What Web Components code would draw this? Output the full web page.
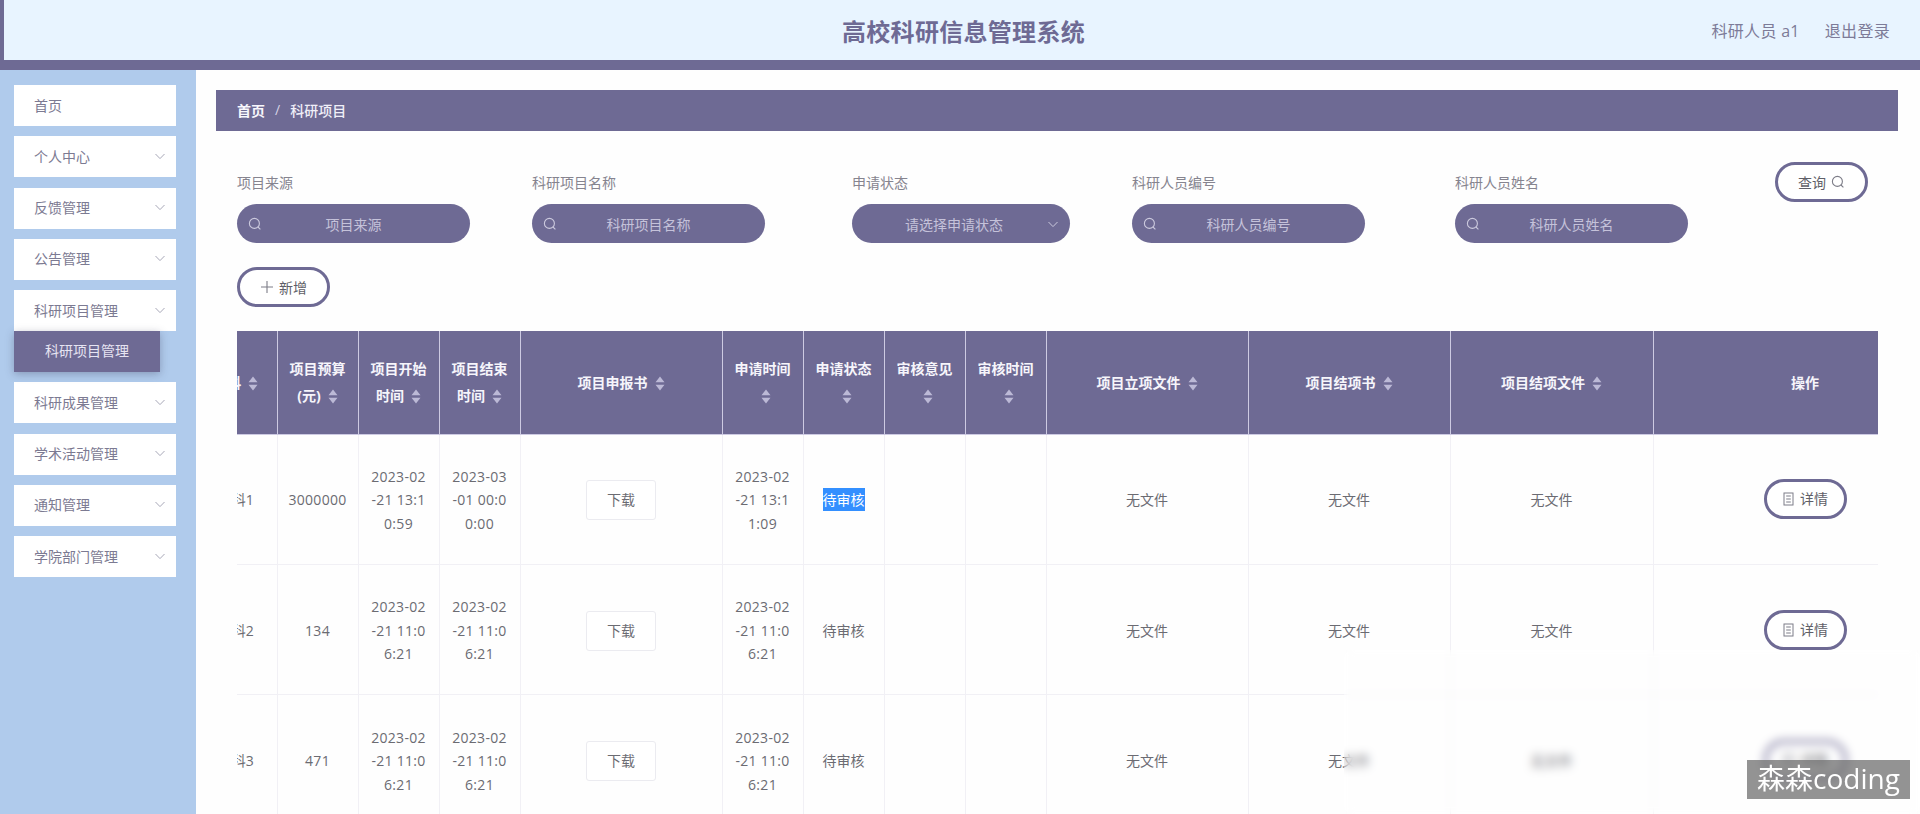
<!DOCTYPE html>
<html lang="zh">
<head>
<meta charset="utf-8">
<title>高校科研信息管理系统</title>
<style>
  html, body { margin: 0; height: 100%; overflow: hidden; background: #fff; }
  body { font-family: "Open Sans", "Noto Sans CJK SC", sans-serif; font-size: 14px; }
</style>
</head>
<body>
<app-shell>
  <app-header slot="header" title-text="高校科研信息管理系统"></app-header>
  <side-nav slot="nav">
    <nav-item plain>首页</nav-item>
    <nav-item>个人中心</nav-item>
    <nav-item>反馈管理</nav-item>
    <nav-item>公告管理</nav-item>
    <nav-item sub="科研项目管理">科研项目管理</nav-item>
    <nav-item>科研成果管理</nav-item>
    <nav-item>学术活动管理</nav-item>
    <nav-item>通知管理</nav-item>
    <nav-item>学院部门管理</nav-item>
  </side-nav>
  <bread-crumb home="首页" current="科研项目"></bread-crumb>
  <filter-bar></filter-bar>
  <project-table></project-table>
</app-shell>

<script>
const PURPLE = '#6e6a94';

const ICONS = {
  search: '<svg width="14" height="14" viewBox="0 0 14 14" fill="none" stroke="currentColor" stroke-width="1.1"><circle cx="6.4" cy="6.4" r="5"/><path d="M10 10l2.4 2.4"/></svg>',
  chevron: '<svg width="12" height="12" viewBox="0 0 12 12" fill="none" stroke="currentColor" stroke-width="1"><path d="M1.5 4l4.5 4.6L10.5 4"/></svg>',
  plus: '<svg width="14" height="14" viewBox="0 0 14 14" fill="none" stroke="currentColor" stroke-width="1.1"><path d="M7 1v12M1 7h12"/></svg>',
  doc: '<svg width="13" height="14" viewBox="0 0 13 14" fill="none" stroke="currentColor" stroke-width="1"><rect x="2" y="1" width="9" height="12"/><path d="M4.2 4h4.6M4.2 7h4.6M4.2 10h4.6"/></svg>'
};

class AppShell extends HTMLElement {
  connectedCallback() {
    this.attachShadow({ mode: 'open' }).innerHTML = `
      <style>
        :host { display: grid; grid-template-columns: 196px 1fr; grid-template-rows: 70px 1fr; height: 814px; position: relative; overflow: hidden; }
        .top { grid-column: 1 / 3; }
        .main { padding: 20px 22px 0 20px; min-width: 0; overflow: hidden; background: #fefefe; }
        /* the recording has a smeared patch over the last row */
        .smear { position: absolute; left: 1344px; top: 650px; right: 0; bottom: 0; backdrop-filter: blur(5px); }
        .mark { position: absolute; left: 1747px; top: 760px; width: 163px; height: 39px; box-sizing: border-box; background: rgba(105,105,105,.72); color: #fff; font-size: 28px; line-height: 37px; text-align: center; white-space: nowrap; }
      </style>
      <div class="top"><slot name="header"></slot></div>
      <slot name="nav"></slot>
      <div class="main"><slot></slot></div>
      <div class="smear"></div>
      <div class="mark">森森coding</div>`;
  }
}

class AppHeader extends HTMLElement {
  connectedCallback() {
    this.attachShadow({ mode: 'open' }).innerHTML = `
      <style>
        :host { display: block; height: 70px; box-sizing: border-box; border-left: 4px solid ${PURPLE}; border-bottom: 10px solid ${PURPLE}; background: #e8f4ff; }
        .bar { height: 60px; display: grid; grid-template-columns: 1fr auto 1fr; align-items: center; }
        h1 { grid-column: 2; margin: 0 0 0 3px; font-size: 24px; font-weight: 700; letter-spacing: .3px; color: ${PURPLE}; white-space: nowrap; }
        .user { grid-column: 3; justify-self: end; display: flex; gap: 25px; padding-right: 30px; font-size: 16px; letter-spacing: .3px; color: #7d7b98; }
      </style>
      <div class="bar">
        <h1>${this.getAttribute('title-text')}</h1>
        <div class="user"><span>科研人员 a1</span><span>退出登录</span></div>
      </div>`;
  }
}

class SideNav extends HTMLElement {
  connectedCallback() {
    this.attachShadow({ mode: 'open' }).innerHTML = `
      <style>
        :host { display: flex; flex-direction: column; gap: 10.25px; padding: 15px 20px 0 14px; box-sizing: border-box; background: #b0cbec; height: 744px; }
      </style>
      <slot></slot>`;
  }
}

class NavItem extends HTMLElement {
  connectedCallback() {
    const sub = this.getAttribute('sub');
    this.attachShadow({ mode: 'open' }).innerHTML = `
      <style>
        :host { display: block; color: #7c7a92; }
        .row { height: 41px; background: #fff; display: flex; align-items: center; justify-content: space-between; padding: 0 10px 2px 20px; box-sizing: border-box; }
        .arrow { display: flex; color: #a8a8b8; }
        .sub { width: 146px; height: 41px; line-height: 39px; text-align: center; background: ${PURPLE}; color: #e6e4f2; box-shadow: 0 2px 8px rgba(60,60,90,.35); position: relative; }
      </style>
      <div class="row"><span><slot></slot></span>${this.hasAttribute('plain') ? '' : `<span class="arrow">${ICONS.chevron}</span>`}</div>
      ${sub ? `<div class="sub">${sub}</div>` : ''}`;
  }
}

class BreadCrumb extends HTMLElement {
  connectedCallback() {
    this.attachShadow({ mode: 'open' }).innerHTML = `
      <style>
        :host { display: flex; align-items: center; height: 41px; box-sizing: border-box; padding: 0 0 2px 21px; background: ${PURPLE}; color: #f0eff8; font-weight: 500; }
        b { color: #f8f7fc; }
        .sep { margin: 0 10px; font-weight: 400; color: #d5d3e6; }
      </style>
      <b>${this.getAttribute('home')}</b><span class="sep">/</span><span>${this.getAttribute('current')}</span>`;
  }
}

class FilterField extends HTMLElement {
  connectedCallback() {
    const isSelect = this.hasAttribute('select');
    this.attachShadow({ mode: 'open' }).innerHTML = `
      <style>
        :host { display: block; }
        label { display: block; height: 42px; line-height: 41px; color: #86848f; }
        .box { height: 39px; border-radius: 20px; background: ${PURPLE}; color: #c5c2da; display: flex; align-items: center; position: relative; }
        .ico { position: absolute; left: 11px; display: flex; color: #cbc9dd; }
        .ico.right { left: auto; right: 11px; }
        .txt { flex: 1; text-align: center; padding-right: ${isSelect ? 14 : 0}px; }
      </style>
      <label>${this.getAttribute('label')}</label>
      <div class="box">
        ${isSelect ? `<span class="ico right">${ICONS.chevron}</span>` : `<span class="ico">${ICONS.search}</span>`}
        <span class="txt">${this.getAttribute('hint')}</span>
      </div>`;
  }
}

class PillButton extends HTMLElement {
  connectedCallback() {
    const icon = ICONS[this.getAttribute('icon')];
    const after = this.hasAttribute('after');
    const size = this.getAttribute('w') || 93;
    this.attachShadow({ mode: 'open' }).innerHTML = `
      <style>
        :host { display: inline-flex; align-items: center; justify-content: center; gap: 5px; box-sizing: border-box; height: 40px; width: ${size}px; border: 3px solid ${PURPLE}; border-radius: 20px; background: #fff; color: #5f5f68; }
        .i { display: flex; color: #7d7d88; }
      </style>
      ${after ? '' : `<span class="i">${icon}</span>`}<slot></slot>${after ? `<span class="i">${icon}</span>` : ''}`;
  }
}

class FilterBar extends HTMLElement {
  connectedCallback() {
    this.attachShadow({ mode: 'open' }).innerHTML = `
      <style>
        :host { display: block; padding: 31px 0 0 21px; }
        .fields { display: grid; grid-template-columns: 295px 320px 280px 323px 320px 93px; justify-content: start; }
        filter-field { width: 233px; }
        .narrow { width: 218px; }
        .add { margin-top: 24px; }
      </style>
      <div class="fields">
        <filter-field label="项目来源" hint="项目来源"></filter-field>
        <filter-field label="科研项目名称" hint="科研项目名称"></filter-field>
        <filter-field class="narrow" select label="申请状态" hint="请选择申请状态"></filter-field>
        <filter-field label="科研人员编号" hint="科研人员编号"></filter-field>
        <filter-field label="科研人员姓名" hint="科研人员姓名"></filter-field>
        <pill-button icon="search" after>查询</pill-button>
      </div>
      <div class="add"><pill-button icon="plus">新增</pill-button></div>`;
  }
}

class SortCaret extends HTMLElement {
  connectedCallback() {
    this.attachShadow({ mode: 'open' }).innerHTML = `
      <style>:host { display: inline-flex; vertical-align: -3px; margin-left: 7px; color: #bcb9d6; } svg { display: block; }</style>
      <svg width="10" height="15" viewBox="0 0 10 15" fill="currentColor"><path d="M5 0.5L9.5 6.2H0.5zM5 14.5L0.5 8.8H9.5z"/></svg>`;
  }
}

const HEAD = [
  ['学科', 82], ['项目预算<br>(元)', 81], ['项目开始<br>时间', 81], ['项目结束<br>时间', 81],
  ['项目申报书', 202], ['申请时间<br>', 81], ['申请状态<br>', 81], ['审核意见<br>', 81], ['审核时间<br>', 81],
  ['项目立项文件', 202], ['项目结项书', 202], ['项目结项文件', 203], ['操作', 304, true]
];

const ROWS = [
  ['学科1', '3000000', '2023-02<br>-21 13:1<br>0:59', '2023-03<br>-01 00:0<br>0:00', '2023-02<br>-21 13:1<br>1:09', true],
  ['学科2', '134', '2023-02<br>-21 11:0<br>6:21', '2023-02<br>-21 11:0<br>6:21', '2023-02<br>-21 11:0<br>6:21'],
  ['学科3', '471', '2023-02<br>-21 11:0<br>6:21', '2023-02<br>-21 11:0<br>6:21', '2023-02<br>-21 11:0<br>6:21']
];

class ProjectTable extends HTMLElement {
  connectedCallback() {
    const cols = HEAD.map(h => `<col style="width:${h[1]}px">`).join('');
    const ths = HEAD.map(h => `<th>${h[0]}${h[2] ? '' : '<sort-caret></sort-caret>'}</th>`).join('');
    const trs = ROWS.map(r => `<tr>
      <td>${r[0]}</td><td class="n">${r[1]}</td><td class="n">${r[2]}</td><td class="n">${r[3]}</td>
      <td><span class="dl">下载</span></td>
      <td class="n">${r[4]}</td>
      <td><span class="${r[5] ? 'picked' : ''}">待审核</span></td>
      <td></td><td></td>
      <td>无文件</td><td>无文件</td><td>无文件</td>
      <td class="op"><pill-button icon="doc" w="83">详情</pill-button></td>
    </tr>`).join('');
    this.attachShadow({ mode: 'open' }).innerHTML = `
      <style>
        :host { display: block; margin: 24px 0 0 21px; width: 1641px; overflow: hidden; }
        table { border-collapse: collapse; table-layout: fixed; width: 1683px; margin-left: -42px; }
        th { height: 103px; box-sizing: border-box; padding: 0; background: ${PURPLE}; color: #f6f5fb; font-weight: 700; line-height: 27px; text-align: center; border-right: 1px solid #cdcae2; border-bottom: 1px solid #cdcae2; }
        td { height: 130.4px; box-sizing: border-box; padding: 2px 0 0; color: #6b6b72; line-height: 23.5px; text-align: center; border-right: 1px solid #f1f0f5; border-bottom: 1px solid #f1f0f5; }
        td:first-child { white-space: nowrap; }
        .n { letter-spacing: .3px; }
        .op { padding: 0; }
        .dl { display: inline-block; width: 70px; height: 40px; line-height: 38px; box-sizing: border-box; border: 1px solid #ebebf0; border-radius: 3px; background: #fff; }
        .picked { background: #338fff; color: #fff; display: inline-block; line-height: 23px; }
      </style>
      <table><colgroup>${cols}</colgroup><thead><tr>${ths}</tr></thead><tbody>${trs}</tbody></table>`;
  }
}

customElements.define('app-shell', AppShell);
customElements.define('app-header', AppHeader);
customElements.define('side-nav', SideNav);
customElements.define('nav-item', NavItem);
customElements.define('bread-crumb', BreadCrumb);
customElements.define('filter-field', FilterField);
customElements.define('pill-button', PillButton);
customElements.define('filter-bar', FilterBar);
customElements.define('sort-caret', SortCaret);
customElements.define('project-table', ProjectTable);
</script>
</body>
</html>
